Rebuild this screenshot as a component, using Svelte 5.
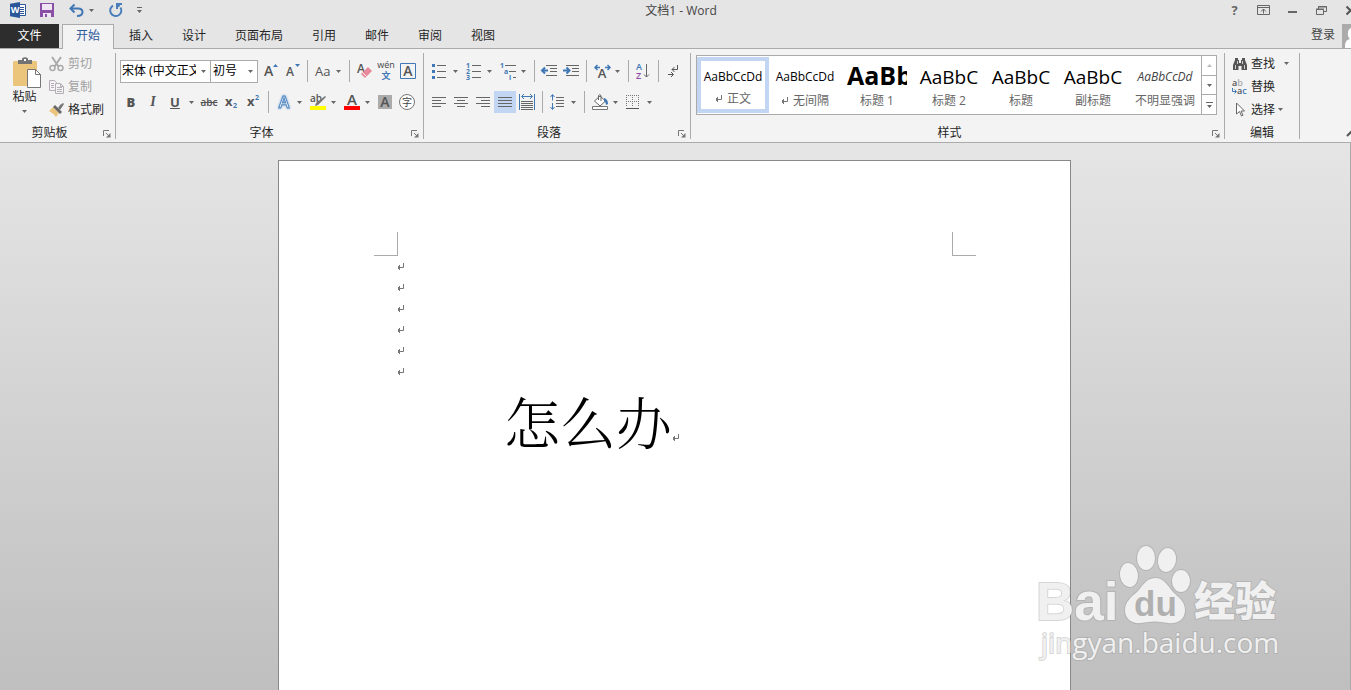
<script>
  const tabs = ['插入', '设计', '页面布局', '引用', '邮件', '审阅', '视图'];
  const styles = [
    { sample: 'AaBbCcDd', name: '正文', kind: 'body', mark: true, on: true },
    { sample: 'AaBbCcDd', name: '无间隔', kind: 'body', mark: true },
    { sample: 'AaBb', name: '标题 1', kind: 'h1' },
    { sample: 'AaBbC', name: '标题 2', kind: 'h2' },
    { sample: 'AaBbC', name: '标题', kind: 'h2' },
    { sample: 'AaBbC', name: '副标题', kind: 'h2' },
    { sample: 'AaBbCcDd', name: '不明显强调', kind: 'subtle' }
  ];
  const emptyLines = [1, 2, 3, 4, 5, 6];
</script>

{#snippet caret()}
  <svg class="caret" width="5" height="3" viewBox="0 0 5 3"><path d="M0 0h5L2.500 3z" fill="#666" /></svg>
{/snippet}

{#snippet returnMark()}
  <svg class="mark" width="8" height="8" viewBox="0 0 8 8"><path d="M6.500 0v4.500H1M2.500 2v5M1.500 3v3" fill="none" stroke="#777" /></svg>
{/snippet}

{#snippet launcher(name)}
  <button class="launcher" aria-label={name}>
    <svg width="8" height="8" viewBox="0 0 8 8"><path d="M.5 6V.5H6M3 3l3 3" fill="none" stroke="#777" /><path d="M7.500 3v4.500H3z" fill="#777" /></svg>
  </button>
{/snippet}

{#snippet lines(d)}
  <svg width="14" height="12" viewBox="0 0 14 12"><path {d} stroke="#666" fill="none" /></svg>
{/snippet}

<div class="app">
  <header>
    <div class="quick">
      <button class="q word" aria-label="Word">
        <svg width="16" height="16" viewBox="0 0 16 16"><path d="M9 2.500h6.500v11H9" fill="#fff" stroke="#2b579a" /><path d="M10 5.500h4M10 7.500h4M10 9.500h4M10 11.500h4" stroke="#2b579a" /><path d="M0 1.800 10 0v16L0 14.200z" fill="#2b579a" /><text x="5" y="11" text-anchor="middle" font-size="9" font-weight="700" fill="#fff">W</text></svg>
      </button>
      <button class="q save" aria-label="保存">
        <svg width="14" height="14" viewBox="0 0 14 14"><path d="M0 0h14v14H0z" fill="#8a50a5" /><path d="M2 1h10v6H2zM3 9h8v5H3z" fill="#efe6f3" /><path d="M3 9h8v1H3zM5 11h2v3H5z" fill="#8a50a5" /></svg>
      </button>
      <button class="q undo" aria-label="撤消">
        <svg width="15" height="13" viewBox="0 0 15 13"><path d="M1.500 4.500h7.500c3 0 4.500 1.500 4.500 3.500 0 2.500-2 4-5.500 4" fill="none" stroke="#4077b3" stroke-width="2" /><path d="M5.500.5 1.500 4.500l4 4" fill="none" stroke="#4077b3" stroke-width="2" /></svg>
        {@render caret()}
      </button>
      <button class="q redo" aria-label="重复">
        <svg width="14" height="14" viewBox="0 0 14 14"><path d="M4 2.600a5.600 5.600 0 1 0 7.500 1.900" fill="none" stroke="#4a7ebb" stroke-width="2" /><path d="M13 1H8v5M8 1l2.500 2.500" stroke="#4a7ebb" stroke-width="2" fill="none" /></svg>
      </button>
      <button class="q more" aria-label="自定义快速访问工具栏">
        <svg width="5" height="6" viewBox="0 0 5 6"><path d="M0 0h5v1H0zM0 3h5L2.500 6z" fill="#666" /></svg>
      </button>
    </div>
    <h1>文档1 - Word</h1>
    <div class="window">
      <button class="help" aria-label="帮助">?</button>
      <button aria-label="功能区显示选项"><svg width="13" height="10" viewBox="0 0 13 10"><path d="M.5.5h12v9H.5zM1 2.500h11M6.500 4v4.500M4 6.500l2.500-2.500L9 6.500" fill="none" stroke="#666" /></svg></button>
      <button aria-label="最小化"><svg width="9" height="8" viewBox="0 0 9 8"><path d="M0 5h9v2H0z" fill="#666" /></svg></button>
      <button aria-label="还原"><svg width="11" height="9" viewBox="0 0 11 9"><path d="M2.500 3V.5h8v5H8M.5 3.500h7v5h-7zM0 3h8M2 1h9" fill="none" stroke="#666" /></svg></button>
      <button aria-label="关闭"><svg width="9" height="9" viewBox="0 0 9 9"><path d="m.5.5 8 8m0-8-8 8" stroke="#555" stroke-width="2" /></svg></button>
    </div>
  </header>

  <nav>
    <button class="tab file">文件</button>
    <button class="tab active">开始</button>
    {#each tabs as t}<button class="tab">{t}</button>{/each}
    <button class="login">登录</button>
    <svg class="avatar" width="9" height="24" viewBox="0 0 9 24"><path d="M0 0h9v24H0z" fill="#ababab" /><path d="M9 4C5 5 5 13 8 15c-4 1-5 3-5 9h6z" fill="#fff" /></svg>
  </nav>

  <section class="ribbon">
    <div class="group clipboard">
      <div class="content side">
        <button class="paste">
          <svg width="28" height="32" viewBox="0 0 28 32"><rect y="4" width="24" height="25" rx="1" fill="#ebc57c" /><path d="M5 7V3h4V1.500Q12 -1 15 1.500V3h4v4z" fill="#737373" /><path d="M11 2h2v2h-2z" fill="#fff" /><path d="M14.500 12.500h8l5 5v13h-13z" fill="#fff" stroke="#777" /><path d="M22.500 12.500v5h5" fill="none" stroke="#777" /></svg>
          <span>粘贴</span>
          {@render caret()}
        </button>
        <div class="stack">
          <button class="line off"><svg width="15" height="16" viewBox="0 0 15 16"><path d="m3 1 6.500 9.500M12 1 5.500 10.500" stroke="#aaa" stroke-width="2" /><g fill="none" stroke="#aaa" stroke-width="1.500"><circle cx="3.500" cy="12" r="2.500" /><circle cx="11.500" cy="12" r="2.500" /></g></svg>剪切</button>
          <button class="line off"><svg width="15" height="14" viewBox="0 0 15 14"><path d="M.5.5h5l2 2v8h-7zM2 3.500h3M2 5.500h3M2 7.500h3" fill="#f3f3f3" stroke="#b5adb5" /><path d="M6.500 3.500h5l3 3v7h-8z" fill="#f3f3f3" stroke="#b5adb5" /><path d="M8 7.500h5M8 9.500h5M8 11.500h5M11.500 4v2.500h2.500" stroke="#b5adb5" fill="none" /></svg>复制</button>
          <button class="line"><svg width="15" height="14" viewBox="0 0 15 14"><path d="m4 4 6 6-3 4Q4 10 0 8z" fill="#ebc57c" /><path d="m6 2 7 7-2 2-7-7z" fill="#666" /><path d="m9 5 2-3 3-2 1 1-2 3-2 3z" fill="#777" /></svg>格式刷</button>
        </div>
      </div>
      <div class="caption"><span>剪贴板</span>{@render launcher('剪贴板')}</div>
    </div>

    <div class="group font">
      <div class="content rows">
        <div class="row">
          <div class="combo family"><select aria-label="字体"><option>宋体 (中文正文)</option></select>{@render caret()}</div>
          <div class="combo size"><select aria-label="字号"><option>初号</option></select>{@render caret()}</div>
          <button class="tool" aria-label="增大字号"><svg width="14" height="16" viewBox="0 0 14 16"><text x="1" y="13" class="ic" font-size="14">A</text><path d="M10 4h5l-2.500-3z" fill="#3f78b5" /></svg></button>
          <button class="tool" aria-label="减小字号"><svg width="14" height="16" viewBox="0 0 14 16"><text x="1" y="13" class="ic" font-size="12">A</text><path d="M10 1h5l-2.500 3z" fill="#3f78b5" /></svg></button>
          <i class="sep"></i>
          <button class="tool split" aria-label="更改大小写"><span class="glyph case">Aa</span>{@render caret()}</button>
          <i class="sep"></i>
          <button class="tool" aria-label="清除所有格式"><svg width="15" height="16" viewBox="0 0 15 16"><text x="0" y="10" class="ic" font-size="12">A</text><path d="m4 11 7-7 4 4-7 7z" fill="#e8889a" /><path d="m5.500 9.500 4 4" stroke="#f3f3f3" /></svg></button>
          <button class="tool" aria-label="拼音指南"><svg width="18" height="18" viewBox="0 0 18 18"><text x="9" y="6" text-anchor="middle" fill="#444" font-size="9">wén</text><text x="9" y="17" text-anchor="middle" font-size="9" font-weight="700" fill="#3f78b5">文</text></svg></button>
          <button class="tool" aria-label="字符边框"><svg width="16" height="16" viewBox="0 0 16 16"><path d="M.5.5h15v15H.5z" fill="#f3f3f3" stroke="#3f78b5" /><text x="8" y="13" text-anchor="middle" class="ic" font-size="14">A</text></svg></button>
        </div>
        <div class="row">
          <button class="tool glyph" aria-label="加粗"><b>B</b></button>
          <button class="tool glyph serif" aria-label="倾斜"><em>I</em></button>
          <button class="tool split" aria-label="下划线"><span class="glyph"><u>U</u></span>{@render caret()}</button>
          <button class="tool glyph strike" aria-label="删除线"><s>abc</s></button>
          <button class="tool" aria-label="下标"><svg width="14" height="14" viewBox="0 0 14 14"><text x="1" y="11" font-size="13" class="ic heavy">x</text><text x="9" y="13" font-size="7" font-weight="700" fill="#3f78b5">2</text></svg></button>
          <button class="tool" aria-label="上标"><svg width="14" height="14" viewBox="0 0 14 14"><text x="1" y="11" font-size="13" class="ic heavy">x</text><text x="9" y="5" font-size="7" font-weight="700" fill="#3f78b5">2</text></svg></button>
          <i class="sep"></i>
          <button class="tool split" aria-label="文本效果"><svg width="16" height="16" viewBox="0 0 16 16"><text x="8" y="14" text-anchor="middle" font-size="16" font-weight="600" fill="#fff" stroke="#4f86c0" class="glow">A</text></svg>{@render caret()}</button>
          <button class="tool split" aria-label="突出显示"><svg width="16" height="16" viewBox="0 0 16 16"><text x="0" y="8" font-size="10" class="ic">ab</text><path d="m15 2 1 1-8 8-3 1 1-3z" fill="#777" /><path d="M0 12h16v4H0z" fill="#ff0" /></svg>{@render caret()}</button>
          <button class="tool split" aria-label="字体颜色"><svg width="16" height="16" viewBox="0 0 16 16"><text x="8" y="11" text-anchor="middle" font-size="15" class="ic">A</text><path d="M0 12h16v4H0z" fill="red" /></svg>{@render caret()}</button>
          <button class="tool" aria-label="字符底纹"><svg width="14" height="14" viewBox="0 0 14 14"><path d="M0 0h14v14H0z" fill="#ababab" /><text x="7" y="12" text-anchor="middle" font-size="14" class="ic">A</text></svg></button>
          <button class="tool" aria-label="带圈字符"><svg width="16" height="16" viewBox="0 0 16 16"><circle cx="8" cy="8" r="7.500" fill="#fff" stroke="#777" /><text x="8" y="12" text-anchor="middle" font-size="10" fill="#444">字</text></svg></button>
        </div>
      </div>
      <div class="caption"><span>字体</span>{@render launcher('字体')}</div>
    </div>

    <div class="group para">
      <div class="content rows">
        <div class="row">
          <button class="tool split" aria-label="项目符号"><svg width="14" height="16" viewBox="0 0 14 16"><path d="M5 2.500h9M5 8.500h9M5 14.500h9" stroke="#666" /><path d="M0 1h3v3H0zM0 7h3v3H0zM0 13h3v3H0z" fill="#3f78b5" /></svg>{@render caret()}</button>
          <button class="tool split" aria-label="编号"><svg width="15" height="17" viewBox="0 0 15 17"><path d="M6 2.500h9M6 8.500h9M6 14.500h9" stroke="#666" /><g class="num"><text x="0" y="5">1</text><text x="0" y="11">2</text><text x="0" y="17">3</text></g></svg>{@render caret()}</button>
          <button class="tool split" aria-label="多级列表"><svg width="17" height="17" viewBox="0 0 17 17"><path d="M5 2.500h11M9 8.500h7M13 14.500h3" stroke="#666" /><g class="num"><text x="0" y="5">1</text><text x="4" y="11">a</text><text x="9" y="17">i</text></g></svg>{@render caret()}</button>
          <i class="sep"></i>
          <button class="tool" aria-label="减少缩进量"><svg width="16" height="12" viewBox="0 0 16 12"><path d="M5 .5h11M9 3.500h7M9 6.500h7M5 10.500h11" stroke="#666" /><path d="M7 5.500H1M4 2.500l-3 3 3 3" fill="none" stroke="#3f78b5" stroke-width="2" /></svg></button>
          <button class="tool" aria-label="增加缩进量"><svg width="16" height="12" viewBox="0 0 16 12"><path d="M3 .5h13M9 3.500h7M9 6.500h7M3 10.500h13" stroke="#666" /><path d="M0 5.500h6M3.500 2.500l3 3-3 3" fill="none" stroke="#3f78b5" stroke-width="2" /></svg></button>
          <i class="sep"></i>
          <button class="tool split" aria-label="中文版式"><svg width="17" height="14" viewBox="0 0 17 14"><text x="8" y="14" text-anchor="middle" font-size="13" class="ic">A</text><path d="M6 3.500H1M3.500 1 1 3.500 3.500 6M11 3.500h5M13.500 1 16 3.500 13.500 6" fill="none" stroke="#3f78b5" stroke-width="1.500" /></svg>{@render caret()}</button>
          <i class="sep"></i>
          <button class="tool" aria-label="排序"><svg width="14" height="16" viewBox="0 0 14 16"><text x="0" y="7" font-size="9" font-weight="600" fill="#3f78b5">A</text><text x="0" y="16" font-size="9" font-weight="600" fill="#8a50a5">Z</text><path d="M10.500 1v13M8 11.500l2.500 2.500 2.500-2.500" fill="none" stroke="#666" /></svg></button>
          <i class="sep"></i>
          <button class="tool" aria-label="显示编辑标记"><svg width="11" height="13" viewBox="0 0 11 13"><path d="M9.500 0v4.500H4M6.500 2 4 4.500 6.500 7M0 9.500h5M3 7l2.500 2.500L3 12" fill="none" stroke="#555" /></svg></button>
        </div>
        <div class="row">
          <button class="tool" aria-label="左对齐">{@render lines('M0 1.500h14M0 4.500h9M0 7.500h14M0 10.500h9')}</button>
          <button class="tool" aria-label="居中">{@render lines('M0 1.500h14M3 4.500h8M0 7.500h14M3 10.500h8')}</button>
          <button class="tool" aria-label="右对齐">{@render lines('M0 1.500h14M5 4.500h9M0 7.500h14M5 10.500h9')}</button>
          <button class="tool pressed" aria-label="两端对齐" aria-pressed="true">{@render lines('M0 1.500h14M0 4.500h14M0 7.500h14M0 10.500h14')}</button>
          <button class="tool" aria-label="分散对齐"><svg width="16" height="16" viewBox="0 0 16 16"><path d="M.5 0v16M15.500 0v16M3 2.500h10M5 0 2.500 2.500 5 5M11 0l2.500 2.500L11 5" fill="none" stroke="#3f78b5" /><path d="M2 7.500h12M2 9.500h12M2 11.500h12M2 13.500h12M2 15.500h12" stroke="#666" /></svg></button>
          <i class="sep"></i>
          <button class="tool split" aria-label="行距"><svg width="14" height="16" viewBox="0 0 14 16"><path d="M6 3.500h8M6 6.500h8M6 9.500h8M6 12.500h8" stroke="#666" /><path d="M2.500 1v5.500M.5 3l2-2.500 2 2.500M2.500 9v6M.5 13l2 2.500 2-2.500" fill="none" stroke="#3f78b5" /></svg>{@render caret()}</button>
          <i class="sep"></i>
          <button class="tool split" aria-label="底纹"><svg width="17" height="16" viewBox="0 0 17 16"><path d="m8 2 5.500 5-5.500 5-5.500-5z" fill="#fff" stroke="#666" /><path d="M6.500 6V1.500Q7.500 0 9 1.500V7" fill="none" stroke="#666" /><path d="M12 4q4 1 4 6l-2 1q0-3-2-4z" fill="#3f78b5" /><path d="M.5 12.500h15v3H.5z" fill="#fff" stroke="#777" /></svg>{@render caret()}</button>
          <button class="tool split" aria-label="边框"><svg width="13" height="14" viewBox="0 0 13 14"><path d="M0 .5h13M0 6.500h13M.5 0v12M6.500 0v12M12.500 0v12" stroke="#777" stroke-dasharray="1 1" /><path d="M0 13.500h13" stroke="#555" /></svg>{@render caret()}</button>
        </div>
      </div>
      <div class="caption"><span>段落</span>{@render launcher('段落')}</div>
    </div>

    <div class="group styles">
      <div class="content">
        <div class="gallery">
          {#each styles as s}
            <button class="style" class:on={s.on}>
              <span class="sample {s.kind}">{s.sample}</span>
              <span class="name">{#if s.mark}{@render returnMark()}{/if}{s.name}</span>
            </button>
          {/each}
          <div class="scroll">
            <button class="faint" aria-label="上一行"><svg width="5" height="3" viewBox="0 0 5 3"><path d="M0 3h5L2.500 0z" fill="#bbb" /></svg></button>
            <button aria-label="下一行">{@render caret()}</button>
            <button aria-label="其他"><svg width="7" height="6" viewBox="0 0 7 6"><path d="M0 0h7v1H0zM1 3h5L3.500 6z" fill="#666" /></svg></button>
          </div>
        </div>
      </div>
      <div class="caption"><span>样式</span>{@render launcher('样式')}</div>
    </div>

    <div class="group edit">
      <div class="content stack">
        <button class="line wide"><svg width="16" height="14" viewBox="0 0 16 14"><path d="M3 1h3v2h1v3h2V3h1V1h3v2l2 5v5H9.500V9h-3v4H1V8l2-5z" fill="#555" /><path d="M3.500 8v4M12.500 8v4M5.500 4v3M10.500 4v3" stroke="#ccc" /></svg>查找{@render caret()}</button>
        <button class="line"><svg width="16" height="16" viewBox="0 0 16 16"><text x="0" y="7" font-size="9" class="ic">a<tspan fill="#aaa">b</tspan></text><text x="5" y="15" font-size="9" class="ic">a<tspan fill="#3f78b5">c</tspan></text><path d="M.5 9v3.500H4M2.500 10.500l2 2-2 2" fill="none" stroke="#3f78b5" /></svg>替换</button>
        <button class="line"><svg width="16" height="15" viewBox="0 0 16 15"><path d="M4.500 1v11l3-2.500 2 4.500 1.500-.8-2-4.200h3.500z" fill="#fff" stroke="#666" /></svg>选择{@render caret()}</button>
      </div>
      <div class="caption"><span>编辑</span></div>
    </div>
    <div class="tail">
      <button class="collapse" aria-label="折叠功能区"><svg width="8" height="6" viewBox="0 0 8 6"><path d="m0 5 4-4 4 4" fill="none" stroke="#555" stroke-width="2" /></svg></button>
    </div>
  </section>

  <main>
    <article>
      <div class="corners"><i class="left"></i><i class="right"></i></div>
      <div class="text">
        {#each emptyLines as n (n)}<p>{@render returnMark()}</p>{/each}
        <p class="big">怎么办{@render returnMark()}</p>
      </div>
    </article>
    <svg class="watermark" width="250" height="124" viewBox="0 0 250 124" role="img" aria-label="Baidu 经验 jingyan.baidu.com">
      <g fill="#f0f0f0" stroke="#999" stroke-opacity=".4" stroke-width="2" paint-order="stroke">
        <text class="brand" x="2" y="80" font-size="53">Bai</text>
        <ellipse cx="95" cy="35" rx="9" ry="12" transform="rotate(-8 95 35)" />
        <ellipse cx="112" cy="18" rx="9" ry="12" />
        <ellipse cx="133" cy="20" rx="9" ry="12" transform="rotate(10 133 20)" />
        <ellipse cx="147" cy="41" rx="9" ry="11" />
        <path d="M121 38c-9 0-13 9-18 14-6 5-12 10-12 18 0 10 8 14 16 13 9-2 18-2 27 0 8 1 17-2 17-13 0-9-7-13-12-18-5-6-9-14-18-14z" />
        <text class="cn" x="160" y="76" font-size="41">经验</text>
        <text class="url" x="7" y="113" font-size="28">jingyan.baidu.com</text>
      </g>
      <text class="brand du" x="100" y="76" font-size="35">du</text>
    </svg>
  </main>
</div>

<style>
  :global(body) { margin: 0; }
  * { box-sizing: border-box; }
  .app {
    display: flex; flex-direction: column; min-height: 100vh; overflow: hidden;
    background: #e5e5e5; color: #262626;
    font: 12px/16px "Open Sans", "Noto Sans CJK SC", sans-serif;
  }
  button { display: flex; align-items: center; justify-content: center; margin: 0; padding: 0; border: 0; background: none; color: inherit; font: inherit; white-space: nowrap; }
  svg { display: block; flex: none; overflow: visible; }

  header { display: flex; height: 24px; padding-bottom: 4px; }
  .quick { display: flex; width: 150px; padding-left: 3px; }
  .q { flex: none; width: 29px; height: 20px; gap: 5px; }
  .q.undo { width: 40px; }
  .q.more { width: 18px; }
  h1 { flex: 1; margin: 0; padding-right: 8px; text-align: center; font-size: 12px; line-height: 21px; font-weight: 400; color: #444; }
  .window { display: flex; width: 131px; }
  .window button { flex: none; width: 29px; height: 20px; }
  .window .help { font-size: 13px; font-weight: 700; color: #666; }

  nav { display: flex; height: 24px; gap: 1px; }
  .tab { padding: 0 14px; height: 24px; }
  .file { width: 59px; margin-right: 2px; background: #2d2d2d; color: #fff; }
  .active { position: relative; z-index: 1; height: 25px; padding: 0 13px 2px; border: 1px solid #ababab; border-bottom: 0; background: #f3f3f3; color: #2b579a; }
  .login { margin: 0 6px 2px auto; color: #444; }

  .ribbon { display: flex; height: 95px; border: solid #ababab; border-width: 1px 0; background: #f3f3f3; }
  .group { display: flex; flex-direction: column; flex: none; height: 86px; margin-top: 4px; border-right: 1px solid #ababab; }
  .content { height: 72px; }
  .clipboard { width: 116px; }
  .font { width: 308px; }
  .para { width: 267px; }
  .styles { flex: 1; }
  .edit { width: 75px; }
  .caption { display: flex; height: 14px; line-height: 16px; text-align: center; }
  .caption span { flex: 1; }
  .launcher { width: 16px; padding-top: 4px; }

  .side { display: flex; }
  .paste { flex-direction: column; justify-content: flex-start; width: 45px; padding: 4px 0 0 4px; }
  .paste svg:first-child { margin-left: 4px; }
  .paste .caret { margin-top: 5px; }
  .stack { display: flex; flex-direction: column; align-items: flex-start; }
  .stack .line { height: 23px; gap: 4px; padding: 0 0 2px 4px; }
  .edit .line { gap: 3px; padding-left: 7px; }
  .edit .wide .caret { margin-left: 6px; }
  .off { color: #a0a0a0; }

  .rows { display: flex; flex-direction: column; gap: 9px; padding: 7px 0 0 4px; }
  .row { display: flex; align-items: center; height: 22px; }
  .tool { flex: none; width: 22px; height: 22px; }
  .split { position: relative; width: 34px; justify-content: space-between; padding: 0 4px; }
  .pressed { background: #c2d5f2; }
  .sep { flex: none; width: 8px; height: 22px; background: linear-gradient(#ababab, #ababab) center / 1px 100% no-repeat; }
  .combo { position: relative; display: flex; align-items: center; height: 23px; border: 1px solid #ababab; background: #fff; }
  .combo select { width: 100%; height: 21px; padding: 0 14px 0 2px; border: 0; background: none; color: #000; font: inherit; appearance: none; outline: 0; }
  .combo .caret { position: absolute; right: 4px; pointer-events: none; }
  .family { width: 91px; }
  .family select { padding-left: 1px; }
  .size { width: 48px; margin: 0 1px 0 -1px; }
  .ic { fill: #555; font-weight: 600; }
  .num { fill: #3f78b5; font-size: 7px; font-weight: 700; }
  .heavy { font-weight: 700; }
  .glow { filter: drop-shadow(0 0 1px #7fa9d8); }
  .glyph { color: #555; font-weight: 700; }
  .glyph b, .glyph u { font-size: 13px; }
  .glyph u { padding-left: 2px; }
  .glyph.case { font-size: 13px; font-weight: 400; }
  .serif { font-family: "Liberation Serif", serif; font-size: 14px; }
  .strike { font-size: 10px; font-weight: 600; }

  .gallery { display: flex; height: 60px; margin: 2px 7px 0 5px; border: 1px solid #ababab; background: #fff; overflow: hidden; }
  .style { flex: none; flex-direction: column; justify-content: flex-start; width: 72px; height: 56px; margin-top: 1px; padding: 6px 6px 0; border: 0; }
  .on { padding: 2px 2px 0; border: 4px solid #c2d5f2; }
  .sample { width: 60px; height: 28px; overflow: hidden; text-align: center; line-height: 28px; color: #000; }
  .h1 { line-height: 24px; font-size: 25px; font-weight: 700; text-align: left; }
  .h2 { font-size: 19px; }
  .subtle { color: #444; font-style: italic; }
  .name { display: flex; align-items: center; gap: 4px; height: 20px; color: #666; }
  .scroll { display: flex; flex-direction: column; width: 15px; margin-left: auto; border-left: 1px solid #ababab; }
  .scroll button { flex: 1; width: 100%; }
  .scroll button + button { border-top: 1px solid #ababab; }
  .tail { display: flex; justify-content: flex-end; align-items: flex-end; width: 51px; }
  .collapse { flex: none; width: 8px; height: 16px; margin-right: -4px; }

  main { position: relative; flex: 1; display: flex; justify-content: center; padding: 17px 1px 0 0; border-right: 1px solid #aaa; background: linear-gradient(#e5e5e5, #bfbfbf); }
  article { width: 793px; padding: 71px 94px 0 95px; border: 1px solid #888; border-bottom: 0; background: #fff; color: #000; }
  .corners { display: flex; justify-content: space-between; height: 24px; }
  .corners i { width: 24px; border-bottom: 1px solid #aaa; }
  .left { border-right: 1px solid #aaa; }
  .right { border-left: 1px solid #aaa; }
  .text { padding: 0 23px; }
  p { display: flex; align-items: center; height: 21px; margin: 0; }
  .big { height: 76px; padding-left: 107px; font: 300 56px/76px "Noto Serif CJK SC", "Noto Sans CJK SC", serif; }
  .big .mark { margin-top: 36px; }
  .watermark { position: absolute; right: 66px; bottom: 26px; }
  .brand { font-family: "Liberation Sans", sans-serif; font-weight: 700; }
  .du { fill: #b0b0b0; }
  .cn { font-weight: 900; }
</style>
